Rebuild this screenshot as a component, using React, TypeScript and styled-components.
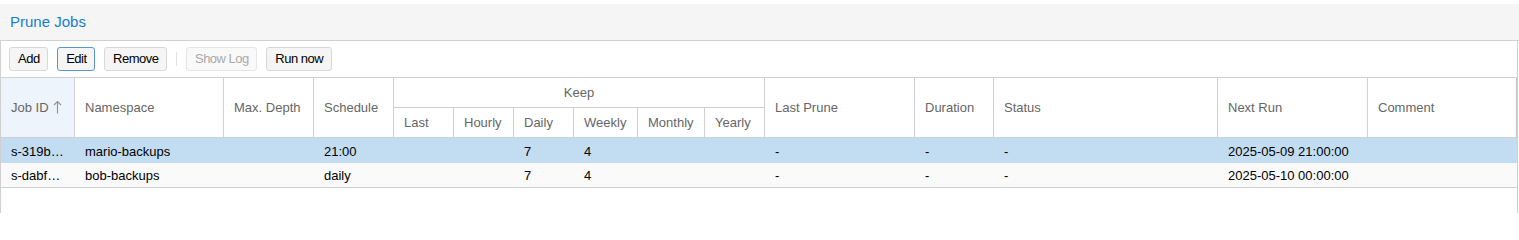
import React from 'react';
import styled, { createGlobalStyle } from 'styled-components';

const GlobalStyle = createGlobalStyle`
  html, body {
    margin: 0;
    padding: 0;
    background: #fff;
    font-family: "Liberation Sans", Arial, Helvetica, sans-serif;
    font-size: 13px;
    overflow: hidden;
  }
`;

type Job = {
  id: string;
  ns: string;
  depth: string;
  schedule: string;
  last: string;
  hourly: string;
  daily: string;
  weekly: string;
  monthly: string;
  yearly: string;
  lastPrune: string;
  duration: string;
  status: string;
  nextRun: string;
  comment: string;
};

const jobs: Job[] = [
  {
    id: 's-319b4a2e-7c1d',
    ns: 'mario-backups',
    depth: '',
    schedule: '21:00',
    last: '',
    hourly: '',
    daily: '7',
    weekly: '4',
    monthly: '',
    yearly: '',
    lastPrune: '-',
    duration: '-',
    status: '-',
    nextRun: '2025-05-09 21:00:00',
    comment: '',
  },
  {
    id: 's-dabf09e1-33aa',
    ns: 'bob-backups',
    depth: '',
    schedule: 'daily',
    last: '',
    hourly: '',
    daily: '7',
    weekly: '4',
    monthly: '',
    yearly: '',
    lastPrune: '-',
    duration: '-',
    status: '-',
    nextRun: '2025-05-10 00:00:00',
    comment: '',
  },
];

const widths = [74, 149, 90, 80, 60, 60, 60, 64, 67, 60, 150, 79, 224, 150, 149];

const fields: (keyof Job)[] = [
  'id',
  'ns',
  'depth',
  'schedule',
  'last',
  'hourly',
  'daily',
  'weekly',
  'monthly',
  'yearly',
  'lastPrune',
  'duration',
  'status',
  'nextRun',
  'comment',
];

const Page = styled.div`
  padding-top: 4px;
  width: 1519px;
  height: 209px;
  overflow: hidden;
`;

const Header = styled.div`
  height: 36px;
  background: #f5f5f5;
  border-bottom: 1px solid #d0d0d0;
  display: flex;
  align-items: center;
  padding-left: 10px;
`;

const Title = styled.h1`
  margin: 0;
  font-size: 15px;
  font-weight: normal;
  color: #157fcc;
  line-height: 20px;
`;

const Body = styled.div`
  width: 1516px;
  border-left: 1px solid #d0d0d0;
  border-right: 1px solid #d0d0d0;
  height: 172px;
`;

const Toolbar = styled.div`
  height: 36px;
  border-bottom: 1px solid #d0d0d0;
  display: flex;
  align-items: center;
  padding-left: 8px;
  gap: 9px;
`;

const Button = styled.button<{ $focused?: boolean }>`
  height: 24px;
  padding: 0 7.5px 0 8px;
  font-family: inherit;
  font-size: 13px;
  letter-spacing: -0.5px;
  color: ${(p) => (p.disabled ? '#a9a9a9' : '#000')};
  background: ${(p) => (p.disabled ? '#f9f9f9' : '#f5f5f5')};
  border: 1px solid ${(p) => (p.$focused ? '#5897d2' : p.disabled ? '#e6e6e6' : '#d8d8d8')};
  border-radius: 3px;
  line-height: 20px;
  cursor: default;
`;

const Separator = styled.span`
  width: 1px;
  height: 14px;
  background: #e0e0e0;
`;

const Grid = styled.table`
  border-collapse: separate;
  border-spacing: 0;
  table-layout: fixed;
  width: 1516px;
`;

const HeadCell = styled.th<{ $center?: boolean; $sorted?: boolean; $last?: boolean }>`
  height: 29px;
  padding: 0 10px;
  font-weight: normal;
  font-size: 13px;
  color: #666;
  text-align: ${(p) => (p.$center ? 'center' : 'left')};
  border-right: 1px solid ${(p) => (p.$last ? '#c4c4c4' : '#d0d0d0')};
  border-bottom: 1px solid #d0d0d0;
  background: ${(p) => (p.$sorted ? '#eef4fb' : '#fff')};
  white-space: nowrap;
  overflow: hidden;
`;

const SortArrow = styled.svg`
  margin-left: 4px;
  vertical-align: -2px;
`;

const Row = styled.tr<{ $selected?: boolean; $alt?: boolean }>`
  background: ${(p) => (p.$selected ? '#c2ddf2' : p.$alt ? '#fafafa' : '#fff')};
`;

const Cell = styled.td<{ $bottom?: boolean }>`
  height: ${(p) => (p.$bottom ? '23px' : '24px')};
  padding: 1px 10px 0;
  color: #000;
  font-size: 13px;
  white-space: nowrap;
  overflow: hidden;
  text-overflow: ellipsis;
  border-bottom: ${(p) => (p.$bottom ? '1px solid #d0d0d0' : 'none')};
`;

export default function App() {
  return (
    <Page>
      <GlobalStyle />
      <Header>
        <Title>Prune Jobs</Title>
      </Header>
      <Body>
        <Toolbar>
          <Button>Add</Button>
          <Button $focused>Edit</Button>
          <Button>Remove</Button>
          <Separator />
          <Button disabled>Show Log</Button>
          <Button>Run now</Button>
        </Toolbar>
        <Grid>
          <colgroup>
            {widths.map((w, i) => (
              <col key={i} style={{ width: w }} />
            ))}
          </colgroup>
          <thead>
            <tr>
              <HeadCell rowSpan={2} $sorted>
                Job ID
                <SortArrow width="9" height="14" viewBox="0 0 9 14">
                  <path d="M4.5 1.5V13.5M1 5L4.5 1.5L8 5" fill="none" stroke="#919191" strokeWidth="1.1" />
                </SortArrow>
              </HeadCell>
              <HeadCell rowSpan={2}>Namespace</HeadCell>
              <HeadCell rowSpan={2}>Max. Depth</HeadCell>
              <HeadCell rowSpan={2}>Schedule</HeadCell>
              <HeadCell colSpan={6} $center>
                Keep
              </HeadCell>
              <HeadCell rowSpan={2}>Last Prune</HeadCell>
              <HeadCell rowSpan={2}>Duration</HeadCell>
              <HeadCell rowSpan={2}>Status</HeadCell>
              <HeadCell rowSpan={2}>Next Run</HeadCell>
              <HeadCell rowSpan={2} $last>
                Comment
              </HeadCell>
            </tr>
            <tr>
              <HeadCell>Last</HeadCell>
              <HeadCell>Hourly</HeadCell>
              <HeadCell>Daily</HeadCell>
              <HeadCell>Weekly</HeadCell>
              <HeadCell>Monthly</HeadCell>
              <HeadCell>Yearly</HeadCell>
            </tr>
          </thead>
          <tbody>
            {jobs.map((job, r) => (
              <Row key={job.id} $selected={r === 0} $alt={r % 2 === 1}>
                {fields.map((f) => (
                  <Cell key={f} $bottom={r === jobs.length - 1}>
                    {job[f]}
                  </Cell>
                ))}
              </Row>
            ))}
          </tbody>
        </Grid>
      </Body>
    </Page>
  );
}
